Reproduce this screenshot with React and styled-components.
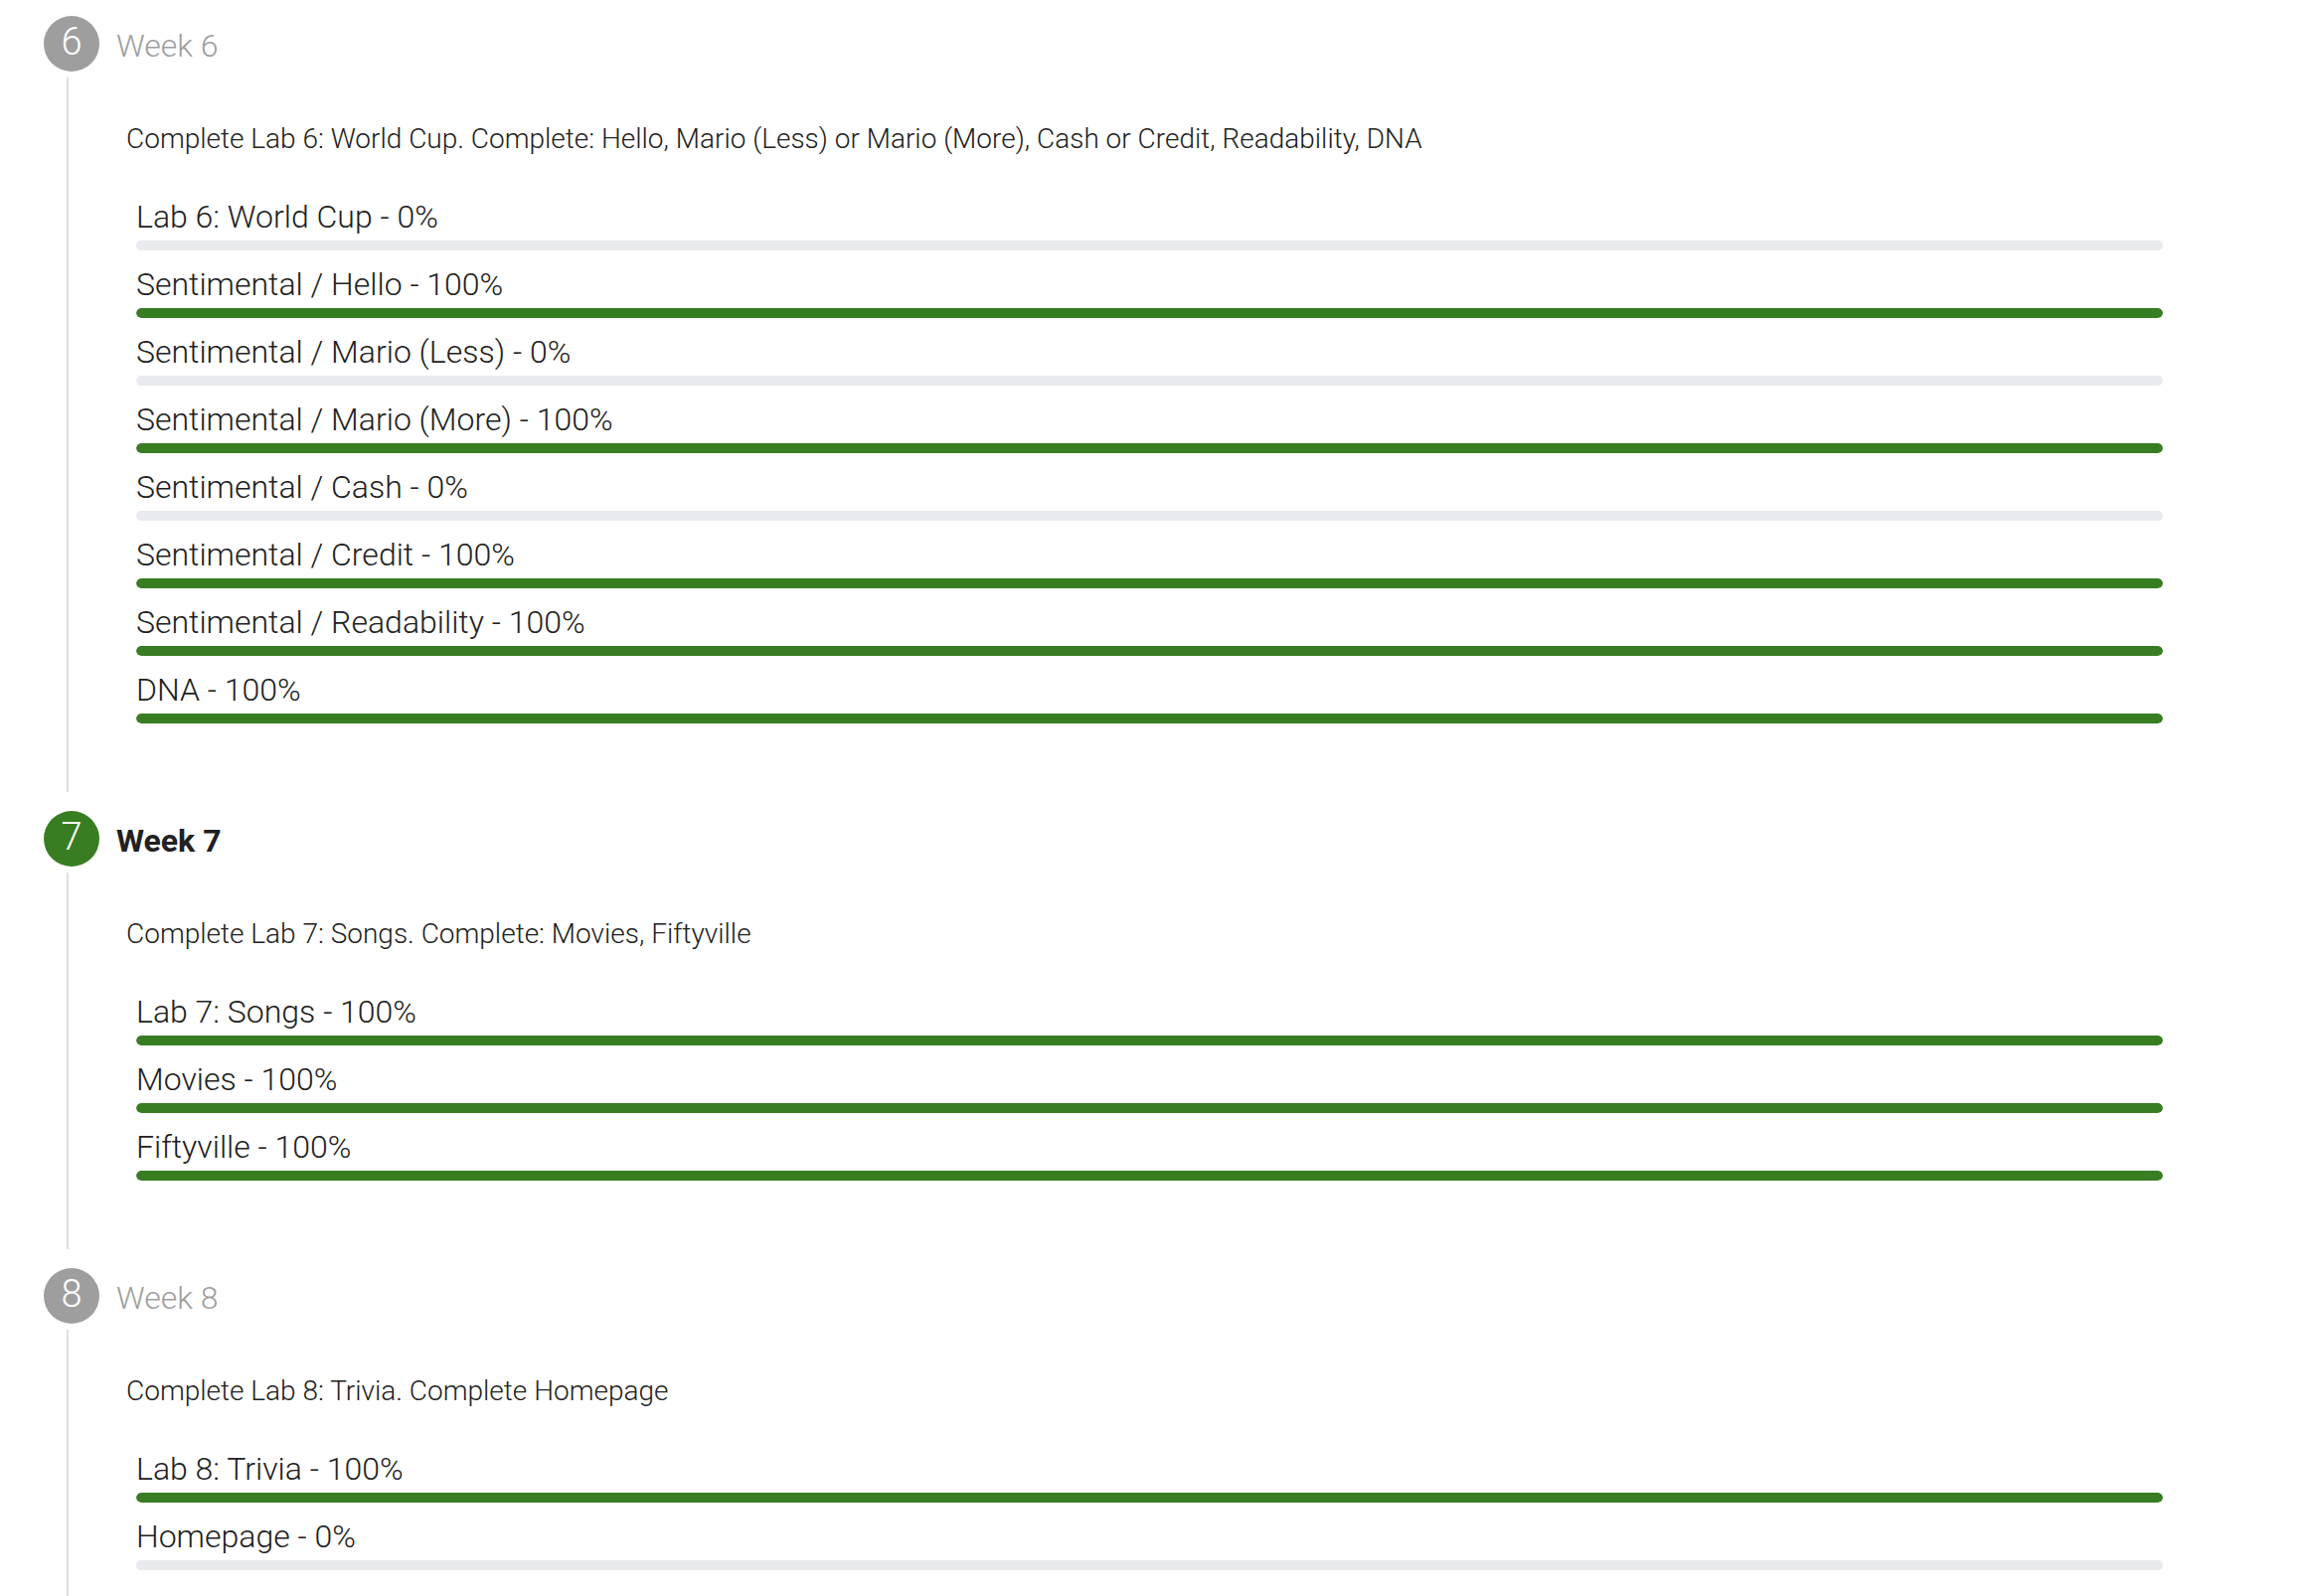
import React from "react";
import styled, { createGlobalStyle } from "styled-components";

const GREEN = "#387d22";

const weeks = [
  {
    num: 6,
    title: "Week 6",
    active: false,
    description:
      "Complete Lab 6: World Cup. Complete: Hello, Mario (Less) or Mario (More), Cash or Credit, Readability, DNA",
    items: [
      { name: "Lab 6: World Cup", value: 0 },
      { name: "Sentimental / Hello", value: 100 },
      { name: "Sentimental / Mario (Less)", value: 0 },
      { name: "Sentimental / Mario (More)", value: 100 },
      { name: "Sentimental / Cash", value: 0 },
      { name: "Sentimental / Credit", value: 100 },
      { name: "Sentimental / Readability", value: 100 },
      { name: "DNA", value: 100 },
    ],
  },
  {
    num: 7,
    title: "Week 7",
    active: true,
    description: "Complete Lab 7: Songs. Complete: Movies, Fiftyville",
    items: [
      { name: "Lab 7: Songs", value: 100 },
      { name: "Movies", value: 100 },
      { name: "Fiftyville", value: 100 },
    ],
  },
  {
    num: 8,
    title: "Week 8",
    active: false,
    description: "Complete Lab 8: Trivia. Complete Homepage",
    items: [
      { name: "Lab 8: Trivia", value: 100 },
      { name: "Homepage", value: 0 },
    ],
  },
];

const GlobalStyle = createGlobalStyle`
  html, body {
    margin: 0;
    padding: 0;
    background: #ffffff;
  }
  body {
    font-family: Roboto, "Noto Sans", "Liberation Sans", sans-serif;
    color: #212121;
  }
`;

const Stepper = styled.div`
  padding: 0 148px 0 44px;
`;

const Step = styled.section`
  padding-top: 16px;
`;

const StepHeader = styled.div`
  display: flex;
  align-items: center;
  gap: 17px;
  height: 56px;
`;

const StepCircle = styled.div`
  width: 56px;
  height: 56px;
  box-sizing: border-box;
  padding-bottom: 5px;
  border-radius: 50%;
  flex-shrink: 0;
  display: flex;
  align-items: center;
  justify-content: center;
  background: ${(p) => (p.$active ? GREEN : "#9e9e9e")};
  color: #ffffff;
  font-size: 38px;
  font-weight: 300;
  line-height: 1;
`;

const StepTitle = styled.div`
  padding-top: 4px;
  font-size: 32px;
  line-height: 1;
  font-weight: ${(p) => (p.$active ? 700 : 300)};
  color: ${(p) => (p.$active ? "#212121" : "#9e9e9e")};
`;

const StepContent = styled.div`
  margin: 6px 0 3px 23px;
  border-left: 2px solid #e0e0e0;
  padding: 41px 0 69px 58px;
`;

const Description = styled.p`
  margin: 0 0 33px;
  font-size: 28px;
  line-height: 42px;
  font-weight: 300;
  color: #212121;
`;

const ItemList = styled.div`
  display: flex;
  flex-direction: column;
  gap: 10px;
  padding-left: 10px;
`;

const Item = styled.div`
  display: flex;
  flex-direction: column;
`;

const ItemLabel = styled.div`
  font-size: 32px;
  line-height: 48px;
  font-weight: 300;
  color: #212121;
`;

const Track = styled.div`
  height: 10px;
  border-radius: 5px;
  background: #e9eaee;
  overflow: hidden;
`;

const Fill = styled.div`
  height: 100%;
  border-radius: 5px;
  background: ${GREEN};
`;

export default function App() {
  return (
    <>
      <GlobalStyle />
      <Stepper>
        {weeks.map((week) => (
          <Step key={week.num}>
            <StepHeader>
              <StepCircle $active={week.active}>{week.num}</StepCircle>
              <StepTitle $active={week.active}>{week.title}</StepTitle>
            </StepHeader>
            <StepContent>
              <Description>{week.description}</Description>
              <ItemList>
                {week.items.map((item) => (
                  <Item key={item.name}>
                    <ItemLabel>
                      {item.name} - {item.value}%
                    </ItemLabel>
                    <Track>
                      <Fill style={{ width: `${item.value}%` }} />
                    </Track>
                  </Item>
                ))}
              </ItemList>
            </StepContent>
          </Step>
        ))}
      </Stepper>
    </>
  );
}
